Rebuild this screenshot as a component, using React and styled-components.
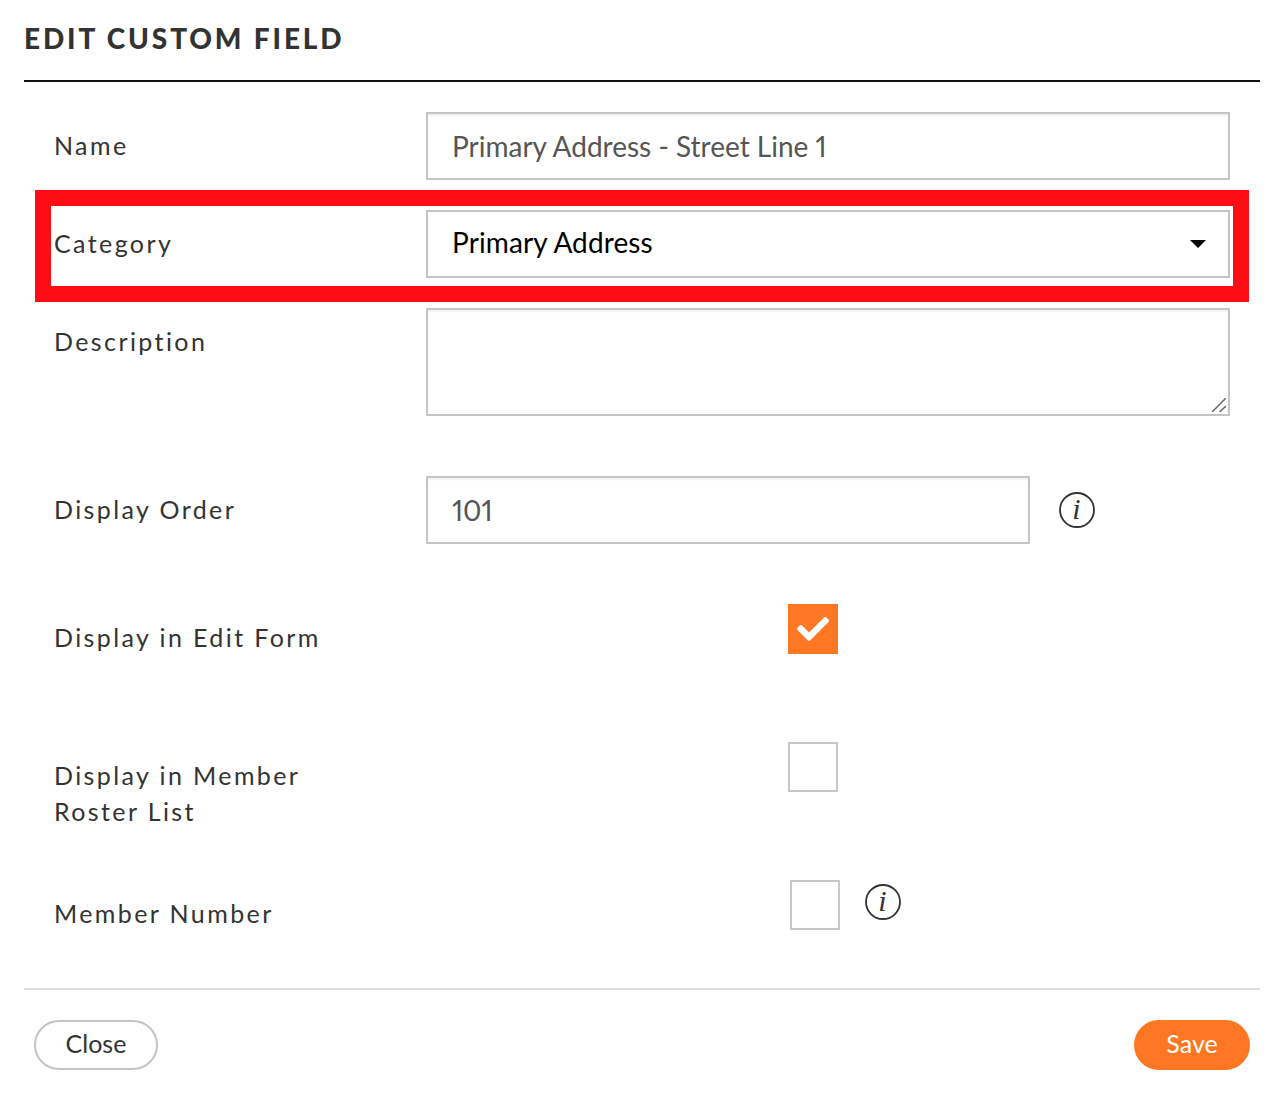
import React from 'react';
import styled, { createGlobalStyle } from 'styled-components';
import { FaCheck } from 'react-icons/fa';

const GlobalStyle = createGlobalStyle`
  body {
    margin: 0;
    background: #fff;
    font-family: 'Lato', 'Liberation Sans', sans-serif;
    font-variant-numeric: proportional-nums;
    color: #333;
  }
`;

const Modal = styled.div`
  box-sizing: border-box;
  width: 1284px;
  height: 1108px;
  padding: 0 24px;
`;
const Title = styled.h1`
  box-sizing: border-box;
  height: 82px;
  margin: 0;
  border-bottom: 2px solid #111;
  font-size: 28px;
  font-weight: 900;
  line-height: 76px;
  letter-spacing: 2.85px;
  color: #333;
`;
const Form = styled.form`
  padding-top: 30px;
  height: 906px;
  box-sizing: border-box;
`;
const Row = styled.div`
  position: relative;
  display: grid;
  grid-template-columns: 372px 1fr;
  padding-left: 30px;
  margin-bottom: ${(p) => p.$gap || 30}px;
`;
const CheckRow = styled(Row)`
  min-height: ${(p) => p.$height || 138}px;
  margin-bottom: 0;
`;
const Label = styled.label`
  padding-top: 15px;
  font-size: 25px;
  line-height: 36px;
  letter-spacing: 2.4px;
  color: #333;
`;
const Field = styled.div`
  display: flex;
  align-items: center;
  gap: 29px;
`;
const TextInput = styled.input`
  box-sizing: border-box;
  width: ${(p) => p.$width || 804}px;
  height: 68px;
  padding: 0 24px;
  border: 2px solid #c4c4c4;
  border-radius: 0;
  outline: none;
  box-shadow: inset 0 2px 2px rgba(0, 0, 0, 0.06);
  font-family: inherit;
  font-variant-numeric: proportional-nums;
  font-size: 28px;
  color: #555;
`;
const SelectWrap = styled.div`
  position: relative;
  width: 804px;
  height: 68px;
  &::after {
    content: '';
    position: absolute;
    top: 30px;
    right: 24px;
    border-top: 8px solid #000;
    border-left: 8px solid transparent;
    border-right: 8px solid transparent;
  }
`;
const Select = styled.select`
  box-sizing: border-box;
  width: 100%;
  height: 100%;
  padding: 0 24px 4px;
  border: 2px solid #c4c4c4;
  border-radius: 0;
  outline: none;
  appearance: none;
  background: #fff;
  font-family: inherit;
  font-size: 28px;
  letter-spacing: 0.1px;
  color: #000;
`;
const TextAreaWrap = styled.div`
  position: relative;
  width: 804px;
  height: 108px;
`;
const TextArea = styled.textarea`
  display: block;
  box-sizing: border-box;
  width: 100%;
  height: 100%;
  padding: 12px 24px;
  border: 2px solid #c4c4c4;
  border-radius: 0;
  outline: none;
  resize: none;
  box-shadow: inset 0 2px 2px rgba(0, 0, 0, 0.06);
  font-family: inherit;
  font-size: 28px;
`;
const ResizeGrip = styled.svg`
  position: absolute;
  right: 4px;
  bottom: 4px;
  width: 14px;
  height: 14px;
`;
const CheckBox = styled.span`
  box-sizing: border-box;
  display: flex;
  align-items: center;
  justify-content: center;
  flex: none;
  width: 50px;
  height: 50px;
  margin-left: ${(p) => p.$inset || 362}px;
  border: ${(p) => (p.$checked ? 'none' : '2px solid #c8c8c8')};
  background: ${(p) => (p.$checked ? '#ff7722' : '#fff')};
  color: #fff;
`;
const CheckField = styled.div`
  display: flex;
  align-items: flex-start;
  gap: 25px;
`;
const InfoIcon = styled.svg`
  display: block;
  flex: none;
  width: 36px;
  height: 36px;
  margin-top: ${(p) => p.$top || 0}px;
`;
const Highlight = styled.div`
  position: absolute;
  top: -20px;
  left: 11px;
  box-sizing: border-box;
  width: 1214px;
  height: 112px;
  border: 16px solid #ff0d14;
  pointer-events: none;
`;
const Footer = styled.div`
  display: flex;
  justify-content: space-between;
  padding: 30px 10px 0;
  border-top: 2px solid #ddd;
`;
const Button = styled.button`
  box-sizing: border-box;
  width: ${(p) => p.$width}px;
  height: 50px;
  border: 2px solid ${(p) => (p.$primary ? '#ff7722' : '#c4c4c4')};
  border-radius: 25px;
  background: ${(p) => (p.$primary ? '#ff7722' : '#fff')};
  color: ${(p) => (p.$primary ? '#fff' : '#333')};
  font-family: inherit;
  font-size: 25px;
  padding: 0 0 4px;
`;

const Info = ({ top }) => (
  <InfoIcon viewBox="0 0 36 36" $top={top}>
    <circle cx="18" cy="18" r="17" fill="none" stroke="#333" strokeWidth="1.8" />
    <text
      x="17.5"
      y="26.5"
      textAnchor="middle"
      fontFamily="'Liberation Serif', serif"
      fontStyle="italic"
      fontSize="30"
      fill="#333"
    >
      i
    </text>
  </InfoIcon>
);

const App = () => (
  <Modal>
    <GlobalStyle />
    <Title>EDIT CUSTOM FIELD</Title>
    <Form>
      <Row>
        <Label>Name</Label>
        <TextInput defaultValue="Primary Address - Street Line 1" />
      </Row>
      <Row>
        <Label>Category</Label>
        <SelectWrap>
          <Select defaultValue="Primary Address">
            <option>Primary Address</option>
          </Select>
        </SelectWrap>
        <Highlight />
      </Row>
      <Row $gap={60}>
        <Label>Description</Label>
        <TextAreaWrap>
          <TextArea />
          <ResizeGrip viewBox="0 0 14 14">
            <path d="M0 14 L14 0 M7.5 14 L14 8" stroke="#666" strokeWidth="1.5" fill="none" />
          </ResizeGrip>
        </TextAreaWrap>
      </Row>
      <Row $gap={60}>
        <Label>Display Order</Label>
        <Field>
          <TextInput $width={604} defaultValue="101" />
          <Info />
        </Field>
      </Row>
      <CheckRow>
        <Label>Display in Edit Form</Label>
        <CheckField>
          <CheckBox $checked>
            <FaCheck size={32} />
          </CheckBox>
        </CheckField>
      </CheckRow>
      <CheckRow>
        <Label>
          Display in Member
          <br />
          Roster List
        </Label>
        <CheckField>
          <CheckBox />
        </CheckField>
      </CheckRow>
      <CheckRow $height={108}>
        <Label>Member Number</Label>
        <CheckField>
          <CheckBox $inset={364} />
          <Info top={4} />
        </CheckField>
      </CheckRow>
    </Form>
    <Footer>
      <Button type="button" $width={124}>Close</Button>
      <Button type="button" $width={116} $primary>Save</Button>
    </Footer>
  </Modal>
);

export default App;
